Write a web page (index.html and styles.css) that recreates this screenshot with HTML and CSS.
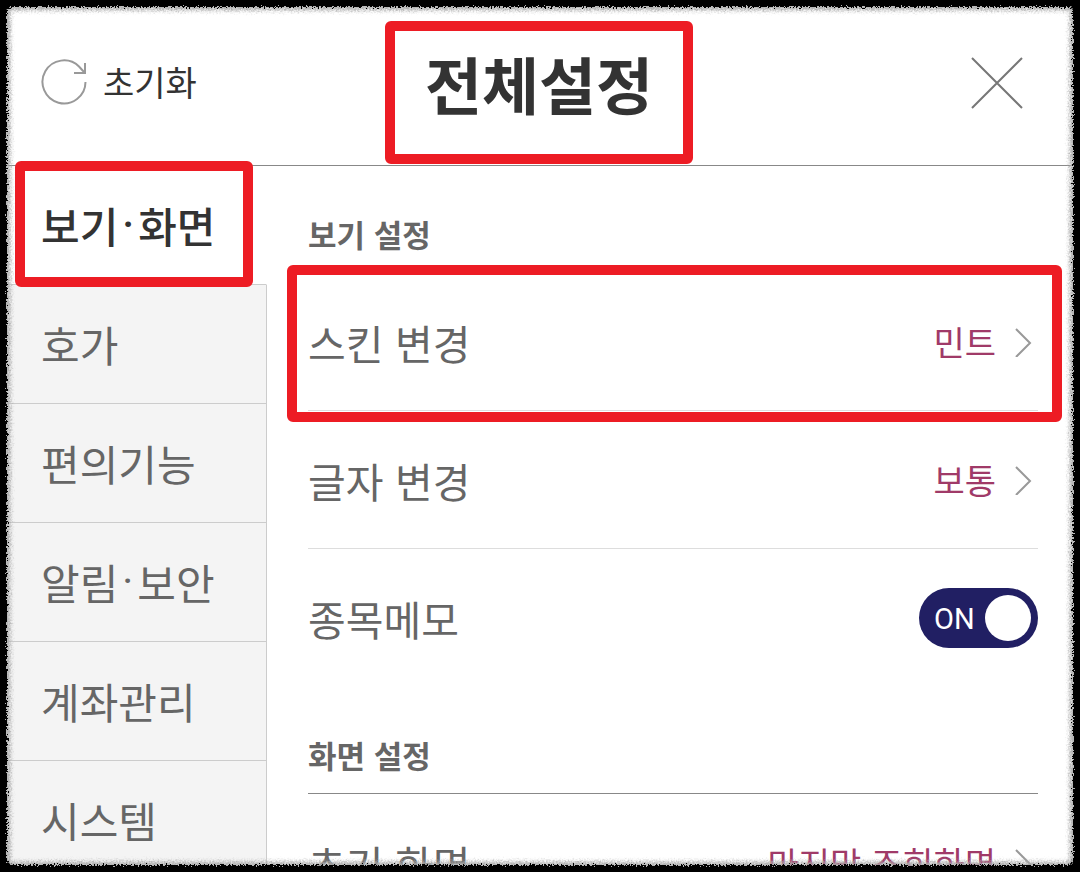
FILE: index.html
```html
<!DOCTYPE html>
<html lang="ko">
<head>
	<meta charset="UTF-8">
	<meta name="viewport" content="width=device-width, initial-scale=1.0">
	<title>전체설정</title>
	<link rel="stylesheet" href="styles.css">
</head>
<body>
	<div class="screen">
		<header class="header">
			<button type="button" class="reset">
				<svg width="48" height="48" viewBox="0 0 48 48" fill="none" stroke="#999" stroke-width="2">
					<path d="M45.500 24A21.500 21.500 0 1 1 39 8.500L44 14" />
					<path d="M45 5v10H34" />
				</svg>
				<span>초기화</span>
			</button>
			<h1 class="title">전체설정</h1>
			<button type="button" class="close" aria-label="닫기">
				<svg width="52" height="52" viewBox="0 0 52 52" fill="none" stroke="#777" stroke-width="2">
					<path d="M1 1l50 50M51 1L1 51" />
				</svg>
			</button>
		</header>

		<div class="body">
			<nav class="tabs">
				<a href="#view" class="tab active">보기<span class="dot">·</span>화면</a>
				<a href="#quote" class="tab">호가</a>
				<a href="#tools" class="tab">편의기능</a>
				<a href="#alerts" class="tab">알림<span class="dot">·</span>보안</a>
				<a href="#account" class="tab">계좌관리</a>
				<a href="#system" class="tab">시스템</a>
			</nav>

			<main class="content" id="view">
				<section>
					<h2 class="section-title">보기 설정</h2>
					<a href="#skin" class="row highlighted">
						<span>스킨 변경</span>
						<span class="value">민트
							<svg class="chevron" width="18" height="30" viewBox="0 0 18 30"><path d="M2 2l14 14L2 30" /></svg>
						</span>
					</a>
					<a href="#font" class="row">
						<span>글자 변경</span>
						<span class="value">보통
							<svg class="chevron" width="18" height="30" viewBox="0 0 18 30"><path d="M2 2l14 14L2 30" /></svg>
						</span>
					</a>
					<div class="row last">
						<label for="memo">종목메모</label>
						<label class="toggle">
							<input type="checkbox" id="memo" checked>
							<span>ON</span>
						</label>
					</div>
				</section>

				<section>
					<h2 class="section-title">화면 설정</h2>
					<a href="#start" class="row">
						<span>초기 화면</span>
						<span class="value">마지막 조회화면
							<svg class="chevron" width="18" height="30" viewBox="0 0 18 30"><path d="M2 2l14 14L2 30" /></svg>
						</span>
					</a>
				</section>
			</main>
		</div>
	</div>

	<!-- Torn black border around the screen -->
	<div class="frame"></div>
	<svg class="filters" width="0" height="0" aria-hidden="true">
		<filter id="rough" x="0" y="0" width="100%" height="100%">
			<feTurbulence type="fractalNoise" baseFrequency="0.6" numOctaves="2" seed="4" result="noise" />
			<feDisplacementMap in="SourceGraphic" in2="noise" scale="7" xChannelSelector="R" yChannelSelector="G" />
		</filter>
	</svg>
</body>
</html>
```

FILE: styles.css
```css
:root {
	--text: #333;
	--text-muted: #666;
	--accent: #a03a68;
	--navy: #211f63;
	--mark: #ed1c24;
	--line: #ccc;
	--line-dark: #888;
}

* {
	box-sizing: border-box;
}

body {
	margin: 0;
	color: var(--text-muted);
	background: #fff;
	font-family: "Noto Sans CJK KR", sans-serif;
	font-size: 42px;
	line-height: 60px;
}

a {
	color: inherit;
	text-decoration: none;
}

button {
	border: none;
	padding: 0;
	background: none;
	font: inherit;
	cursor: pointer;
}

svg {
	display: block;
}

.screen {
	display: flex;
	flex-direction: column;
	height: 100vh;
	padding: 6px;
	overflow: hidden;
}

/* Header */
.header {
	display: grid;
	grid-template-columns: 1fr auto 1fr;
	align-items: center;
	padding: 15px 36px 1px 34px;
	border-bottom: 1px solid var(--line-dark);
}

.reset {
	display: flex;
	align-items: center;
	gap: 15px;
	padding-bottom: 22px;
	color: var(--text);
	font-size: 34px;
	line-height: 48px;
}

.title {
	margin: 0;
	padding: 12px 30px 31px;
	border: 10px solid var(--mark);
	border-radius: 6px;
	color: var(--text);
	font-size: 62px;
	font-weight: 700;
	line-height: 80px;
}

.close {
	justify-self: end;
	margin-right: 15px;
	padding-bottom: 20px;
}

/* Layout below the header */
.body {
	display: flex;
	flex: 1;
}

.tabs {
	flex: none;
	width: 261px;
}

.tab {
	display: flex;
	align-items: center;
	height: 119px;
	padding-left: 35px;
	border-right: 1px solid var(--line);
	border-bottom: 1px solid var(--line);
	background: #f4f4f4;
}

.tab.active {
	position: relative;
	border-right-color: transparent;
	background: #fff;
	color: var(--text);
	font-weight: 500;
}

.dot {
	padding: 0 4px;
	font-family: Roboto, sans-serif;
}

.content {
	flex: 1;
	padding: 0 36px 0 41px;
}

.section-title {
	margin: 0;
	padding: 46px 0 16px;
	border-bottom: 1px solid var(--line-dark);
	font-size: 31px;
	font-weight: 700;
	line-height: 44px;
}

.row {
	display: flex;
	align-items: center;
	justify-content: space-between;
	height: 138px;
	border-bottom: 1px solid #ddd;
	font-size: 41px;
}

.row.last {
	border-bottom-color: transparent;
}

.value {
	display: flex;
	align-items: center;
	gap: 18px;
	padding-right: 6px;
	color: var(--accent);
	font-size: 34px;
}

.chevron {
	fill: none;
	stroke: #999;
	stroke-width: 2;
}

/* Red marker boxes */
.highlighted {
	position: relative;
}

.tab.active::after,
.highlighted::after {
	content: "";
	position: absolute;
	z-index: 1;
	border: 10px solid var(--mark);
	border-radius: 6px;
}

.tab.active::after {
	inset: -5px 13px -3px 9px;
}

.highlighted::after {
	inset: -8px -24px -12px -21px;
}

/* Toggle */
.toggle {
	display: grid;
	align-items: center;
	color: #fff;
	font-family: Roboto, sans-serif;
	font-size: 29px;
	cursor: pointer;
}

.toggle input,
.toggle span {
	grid-area: 1 / 1;
}

.toggle span {
	z-index: 1;
	padding-top: 2px;
	padding-left: 15px;
}

.toggle input {
	display: flex;
	align-items: center;
	justify-content: flex-end;
	appearance: none;
	width: 119px;
	height: 60px;
	margin: 0;
	padding: 7px;
	border-radius: 30px;
	background: var(--navy);
}

.toggle input::before {
	content: "";
	width: 46px;
	height: 46px;
	border-radius: 50%;
	background: #fff;
}

.toggle input:not(:checked) {
	justify-content: flex-start;
	background: #aaa;
}

.frame {
	position: fixed;
	z-index: 2;
	inset: -12px;
	border: 19px solid #000;
	border-radius: 24px;
	box-shadow: inset 0 0 4px 3px #aaa, 0 0 0 20px #000;
	filter: url(#rough);
	pointer-events: none;
}

.filters {
	position: absolute;
}
```
